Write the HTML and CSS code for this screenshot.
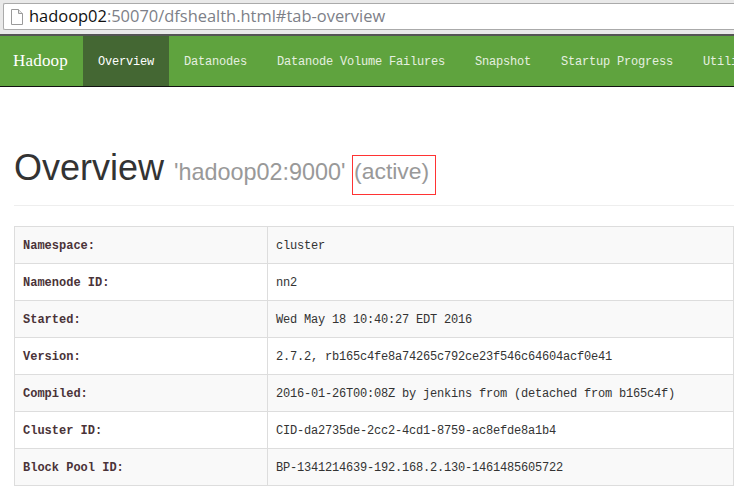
FILE: index.html
```html
<!DOCTYPE html>
<html lang="en">
<head>
  <meta charset="UTF-8" />
  <title>Namenode information</title>
  <link rel="stylesheet" href="styles.css">
</head>
<body>
  <div class="urlbar">
    <div class="omnibox">
      <svg class="page-icon" width="14" height="16" viewBox="0 0 14 16">
        <path d="M1.5 0.5h7l4 4v11h-11z" fill="#fff" stroke="#9a9a9a"/>
        <path d="M8.5 0.5v4h4" fill="#e8e8e8" stroke="#9a9a9a"/>
      </svg>
      <span class="host">hadoop02</span><span class="rest">:50070/dfshealth.html#tab-overview</span>
    </div>
  </div>

  <nav class="navbar">
    <a class="brand">Hadoop</a>
    <a class="tab active">Overview</a>
    <a class="tab">Datanodes</a>
    <a class="tab">Datanode Volume Failures</a>
    <a class="tab">Snapshot</a>
    <a class="tab">Startup Progress</a>
    <a class="tab">Utilities</a>
  </nav>

  <div class="container">
    <div class="page-header">
      <h1>Overview <small>'hadoop02:9000' <span class="marked">(active)</span></small></h1>
    </div>

    <table class="info">
      <tr><th>Namespace:</th><td>cluster</td></tr>
      <tr><th>Namenode ID:</th><td>nn2</td></tr>
      <tr><th>Started:</th><td>Wed May 18 10:40:27 EDT 2016</td></tr>
      <tr><th>Version:</th><td>2.7.2, rb165c4fe8a74265c792ce23f546c64604acf0e41</td></tr>
      <tr><th>Compiled:</th><td>2016-01-26T00:08Z by jenkins from (detached from b165c4f)</td></tr>
      <tr><th>Cluster ID:</th><td>CID-da2735de-2cc2-4cd1-8759-ac8efde8a1b4</td></tr>
      <tr><th>Block Pool ID:</th><td>BP-1341214639-192.168.2.130-1461485605722</td></tr>
    </table>
  </div>
</body>
</html>
```

FILE: styles.css
```css
html,
body {
  overflow: hidden;
}
body {
  margin: 0;
  height: 491px;
  width: 734px;
  background: #fff;
  font-family: "Liberation Mono", monospace;
  font-size: 12px;
  letter-spacing: -0.2px;
  color: #333;
}
.urlbar {
  height: 36px;
  box-sizing: border-box;
  padding: 3px 0 0 3px;
  background: #e9e9e9;
  border-bottom: 2px solid #555;
}
.omnibox {
  height: 27px;
  box-sizing: border-box;
  padding-left: 6px;
  display: flex;
  align-items: center;
  background: #fff;
  border: 1px solid #aaa;
  border-right: 0;
  border-radius: 2px 0 0 2px;
  font-family: "Open Sans", sans-serif;
  font-size: 16.45px;
  letter-spacing: 0;
}
.page-icon {
  margin-right: 5px;
  margin-top: 1px;
}
.host {
  color: #111;
  margin-top: -2px;
}
.rest {
  color: #7d7f88;
  margin-top: -2px;
}
.navbar {
  height: 51px;
  box-sizing: border-box;
  display: flex;
  background: #5fa33e;
  border-bottom: 1px solid #111;
  white-space: nowrap;
  overflow: hidden;
}
.navbar a {
  display: block;
  flex: none;
  color: #e6f0e0;
  line-height: 52px;
}
.navbar .brand {
  width: 83px;
  padding-left: 13px;
  box-sizing: border-box;
  font-family: "Liberation Serif", serif;
  font-size: 17px;
  line-height: 50px;
  letter-spacing: 0.2px;
  color: #fff;
}
.tab {
  padding: 0 15px;
}
.navbar .tab.active {
  background: #446733;
  color: #fff;
}
.container {
  padding: 0 0 0 14px;
}
.page-header {
  margin-top: 40px;
  height: 79px;
  box-sizing: border-box;
  padding-top: 21px;
  border-bottom: 1px solid #eee;
}
h1 {
  margin: 0;
  font-family: "Liberation Sans", sans-serif;
  font-size: 36px;
  font-weight: 500;
  line-height: 40px;
  letter-spacing: 0;
  color: #333;
}
small {
  font-size: 23.4px;
  color: #999;
}
.marked {
  display: inline-block;
  vertical-align: 1px;
  border: 1px solid #f33;
  padding: 1px 6px 9px 1px;
  font-size: 22.9px;
  line-height: 28px;
}
.info {
  margin-top: 20px;
  width: 720px;
  border-collapse: collapse;
  table-layout: fixed;
}
.info th,
.info td {
  height: 37px;
  box-sizing: border-box;
  padding: 2px 8px 0;
  border: 1px solid #ddd;
  text-align: left;
  white-space: nowrap;
}
.info th {
  width: 253px;
  color: #4a3338;
  font-weight: bold;
  letter-spacing: 0;
}
.info tr:nth-child(odd) th,
.info tr:nth-child(odd) td {
  background: #f9f9f9;
}
```
